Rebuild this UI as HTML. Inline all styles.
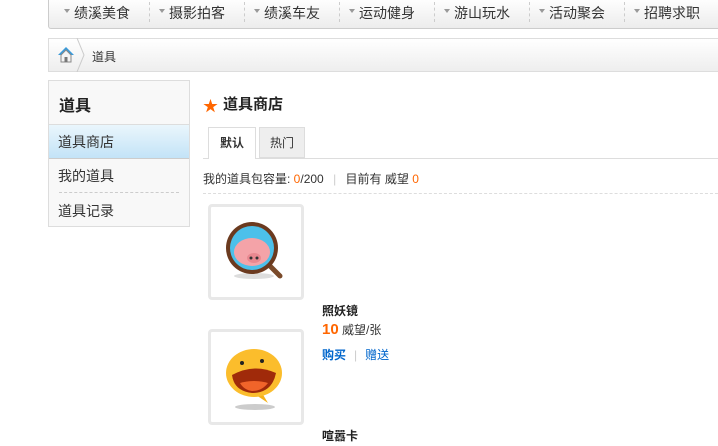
<!DOCTYPE html>
<html><head><meta charset="utf-8"><style>
*{margin:0;padding:0;box-sizing:border-box}
body{width:718px;height:446px;overflow:hidden;background:#fff;font-family:"Liberation Sans","Noto Sans CJK SC",sans-serif;font-size:12px;color:#333;position:relative}
.a{position:absolute;white-space:nowrap}
.nav{left:48px;top:-2px;width:680px;height:31px;border:1px solid #ccc;border-top:none;border-radius:0 0 3px 3px;background:linear-gradient(#fff,#ececec)}
.ni{font-size:14px;color:#333;top:3px}
.tri{top:9px;width:0;height:0;border-left:3px solid transparent;border-right:3px solid transparent;border-top:4px solid #999}
.sep{top:2px;height:20px;border-left:1px dashed #ccc}
.bc{left:48px;top:38px;width:680px;height:34px;border:1px solid #ddd;background:linear-gradient(#fff,#eee)}
.side{left:48px;top:80px;width:142px;height:147px;border:1px solid #ddd;background:#f8f8f8}
.orange{color:#f60}
.box{width:96px;height:96px;border:3px solid #e8e8e8;border-radius:4px;background:#fff}
</style></head><body>
<div class="a nav"></div>
<div class="a tri" style="left:64px"></div><div class="a ni" style="left:74px">绩溪美食</div>
<div class="a sep" style="left:149px"></div>
<div class="a tri" style="left:159px"></div><div class="a ni" style="left:169px">摄影拍客</div>
<div class="a sep" style="left:244px"></div>
<div class="a tri" style="left:254px"></div><div class="a ni" style="left:264px">绩溪车友</div>
<div class="a sep" style="left:339px"></div>
<div class="a tri" style="left:349px"></div><div class="a ni" style="left:359px">运动健身</div>
<div class="a sep" style="left:434px"></div>
<div class="a tri" style="left:444px"></div><div class="a ni" style="left:454px">游山玩水</div>
<div class="a sep" style="left:529px"></div>
<div class="a tri" style="left:539px"></div><div class="a ni" style="left:549px">活动聚会</div>
<div class="a sep" style="left:624px"></div>
<div class="a tri" style="left:634px"></div><div class="a ni" style="left:644px">招聘求职</div>

<div class="a bc"></div>
<svg class="a" style="left:57px;top:46px" width="18" height="17" viewBox="0 0 18 17"><path d="M1 9 L9 1 L17 9 L14 9 L9 4 L4 9Z" fill="#3a9ad9"/><path d="M4 9 L9 4 L14 9 V16 H4Z" fill="#f4f4f4" stroke="#888"/><rect x="7.5" y="11" width="3" height="5" fill="#777"/></svg>
<svg class="a" style="left:76px;top:38px" width="10" height="34"><path d="M1 0 L8 17 L1 34" fill="none" stroke="#ccc"/></svg>
<div class="a" style="left:92px;top:48px">道具</div>

<div class="a side"></div>
<div class="a" style="left:59px;top:92px;font-size:16px;font-weight:bold;color:#222">道具</div>
<div class="a" style="left:49px;top:124px;width:140px;height:35px;border-top:1px solid #ddd;border-bottom:1px solid #ccc;background:linear-gradient(#eaf6fc,#c3e3f7)"></div>
<div class="a" style="left:58px;top:132px;font-size:14px">道具商店</div>
<div class="a" style="left:58px;top:166px;font-size:14px">我的道具</div>
<div class="a" style="left:59px;top:192px;width:120px;border-top:1px dashed #ccc"></div>
<div class="a" style="left:58px;top:201px;font-size:14px">道具记录</div>

<div class="a" style="left:203px;top:95px;color:#f60;font-size:15px">★</div>
<div class="a" style="left:223px;top:93px;font-size:15px;font-weight:bold;color:#222">道具商店</div>
<div class="a" style="left:203px;top:158px;width:520px;border-top:1px solid #ddd"></div>
<div class="a" style="left:208px;top:127px;width:48px;height:32px;border:1px solid #ddd;border-bottom:none;background:#fff;text-align:center;line-height:31px;font-weight:bold">默认</div>
<div class="a" style="left:259px;top:127px;width:46px;height:31px;border:1px solid #ddd;background:#eee;text-align:center;line-height:31px">热门</div>
<div class="a" style="left:203px;top:170px">我的道具包容量: <span class="orange">0</span>/200 <span style="color:#ccc;margin:0 6px">|</span> 目前有 威望 <span class="orange">0</span></div>
<div class="a" style="left:203px;top:193px;width:520px;border-top:1px dashed #ddd"></div>

<div class="a box" style="left:208px;top:204px"></div>
<svg class="a" style="left:222px;top:218px" width="70" height="70" viewBox="0 0 70 70"><line x1="46" y1="46" x2="58" y2="58" stroke="#7a4a2a" stroke-width="5" stroke-linecap="round"/><ellipse cx="32" cy="58" rx="20" ry="3" fill="#ddd"/><circle cx="30" cy="30" r="26" fill="#6b3a1f"/><circle cx="30" cy="30" r="22" fill="#4cc0ea"/><ellipse cx="30" cy="34" rx="18" ry="14" fill="#f4a3a8"/><ellipse cx="32" cy="40" rx="7" ry="5" fill="#e98890"/><circle cx="29" cy="40" r="1.5" fill="#333"/><circle cx="35" cy="40" r="1.5" fill="#333"/></svg>
<div class="a box" style="left:208px;top:329px"></div>
<svg class="a" style="left:222px;top:343px" width="70" height="70" viewBox="0 0 70 70"><ellipse cx="33" cy="64" rx="20" ry="3" fill="#ccc"/><path d="M40 50 L46 60 L34 52Z" fill="#f5b21a"/><ellipse cx="32" cy="30" rx="28" ry="24" fill="#fbbd2c"/><path d="M10 32 Q32 20 54 30 Q50 50 30 50 Q12 48 10 32Z" fill="#a02a0a"/><path d="M18 40 Q32 36 46 40 Q40 48 30 48 Q22 47 18 40Z" fill="#f0642a"/><circle cx="20" cy="20" r="2" fill="#222"/><circle cx="40" cy="18" r="2" fill="#222"/></svg>
<div class="a" style="left:322px;top:302px;font-weight:bold;color:#222">照妖镜</div>
<div class="a" style="left:322px;top:321px"><span class="orange" style="font-size:15px;font-weight:bold">10</span> 威望/张</div>
<div class="a" style="left:322px;top:346px;color:#06c"><b>购买</b><span style="color:#ccc;margin:0 8px">|</span>赠送</div>
<div class="a" style="left:322px;top:427px;font-weight:bold;color:#222">喧嚣卡</div>
</body></html>
